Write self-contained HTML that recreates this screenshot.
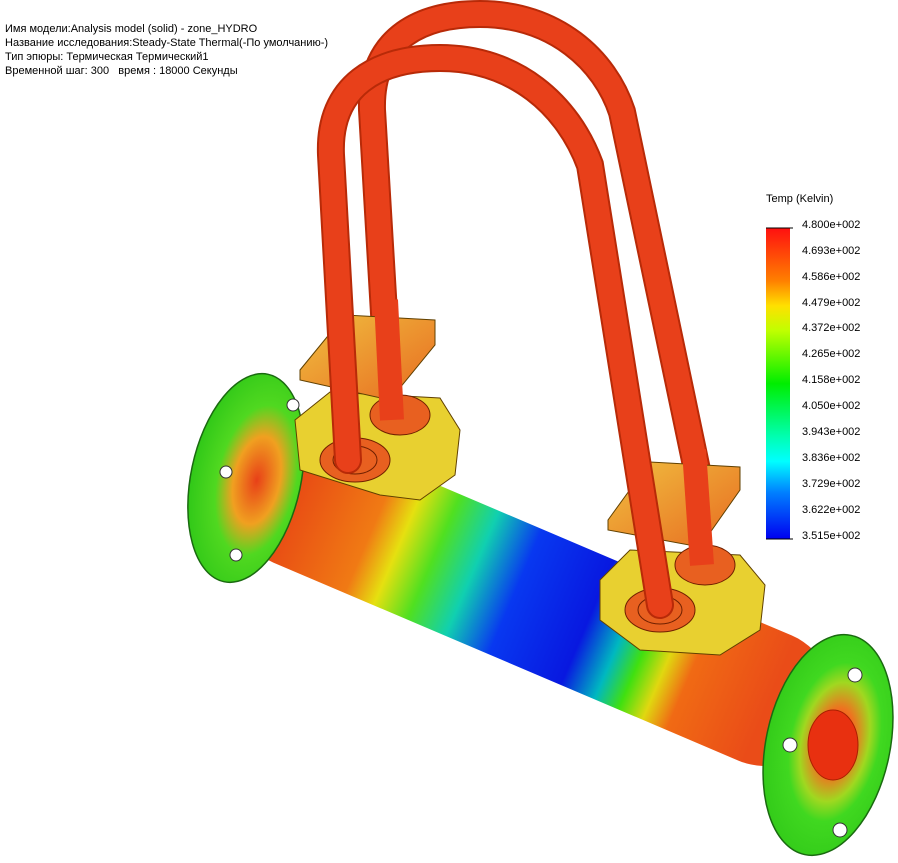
<!DOCTYPE html>
<html><head><meta charset="utf-8"><style>
html,body{margin:0;padding:0;background:#fff;}
#w{position:relative;width:898px;height:863px;overflow:hidden;font-family:"Liberation Sans","DejaVu Sans",sans-serif;}
.hd{position:absolute;left:5px;top:22px;font-size:11px;line-height:14px;color:#000;}
.lg{position:absolute;font-size:11px;color:#000;}
</style></head><body><div id="w">
<svg width="898" height="863" style="position:absolute;left:0;top:0">
<defs>
<linearGradient id="pipe" gradientUnits="userSpaceOnUse" x1="290" y1="495" x2="770" y2="700">
<stop offset="0" stop-color="#e84a14"/><stop offset="0.17" stop-color="#f07a14"/>
<stop offset="0.23" stop-color="#e6e010"/><stop offset="0.3" stop-color="#50e020"/>
<stop offset="0.38" stop-color="#10d0b0"/><stop offset="0.47" stop-color="#0838f0"/>
<stop offset="0.62" stop-color="#0818e0"/><stop offset="0.69" stop-color="#00b8c0"/>
<stop offset="0.74" stop-color="#40e010"/><stop offset="0.79" stop-color="#e0d810"/>
<stop offset="0.84" stop-color="#f06a14"/><stop offset="1" stop-color="#ea4c18"/>
</linearGradient>
<radialGradient id="fl1" cx="0.6" cy="0.5" r="0.6"><stop offset="0" stop-color="#e84018"/><stop offset="0.35" stop-color="#f0a020"/><stop offset="0.6" stop-color="#50d820"/><stop offset="1" stop-color="#30c818"/></radialGradient>
<radialGradient id="fl2" cx="0.55" cy="0.48" r="0.6"><stop offset="0" stop-color="#e83010"/><stop offset="0.25" stop-color="#f07020"/><stop offset="0.45" stop-color="#a0d820"/><stop offset="0.6" stop-color="#40d820"/><stop offset="1" stop-color="#30c818"/></radialGradient>
<linearGradient id="bar" x1="0" y1="0" x2="0" y2="1">
<stop offset="0" stop-color="#ff1010"/><stop offset="0.17" stop-color="#ff8000"/><stop offset="0.25" stop-color="#ffe000"/><stop offset="0.33" stop-color="#c0ff00"/><stop offset="0.5" stop-color="#00ee00"/><stop offset="0.67" stop-color="#00ffb0"/><stop offset="0.75" stop-color="#00ffff"/><stop offset="0.85" stop-color="#0080ff"/><stop offset="1" stop-color="#0000f0"/>
</linearGradient>
<linearGradient id="plate" x1="0" y1="0" x2="1" y2="1"><stop offset="0" stop-color="#f0c040"/><stop offset="1" stop-color="#e86a20"/></linearGradient>
</defs>
<!-- back tube -->
<path d="M385 330 L372 110 C370 35 425 14 480 14 C555 14 605 60 622 112 L697 470" fill="none" stroke="#b82a08" stroke-width="28" stroke-linecap="round"/>
<path d="M385 330 L372 110 C370 35 425 14 480 14 C555 14 605 60 622 112 L697 470" fill="none" stroke="#e8401a" stroke-width="24" stroke-linecap="round"/>
<!-- main pipe -->
<line x1="300" y1="500" x2="765" y2="698" stroke="url(#pipe)" stroke-width="136" stroke-linecap="round"/>
<!-- left flange -->
<ellipse cx="246" cy="478" rx="55" ry="106" transform="rotate(12 246 478)" fill="url(#fl1)" stroke="#1a6a10" stroke-width="1.5"/>
<circle cx="226" cy="472" r="6" fill="#fff" stroke="#333"/><circle cx="236" cy="555" r="6" fill="#fff" stroke="#333"/><circle cx="293" cy="405" r="6" fill="#fff" stroke="#333"/>
<!-- right flange -->
<ellipse cx="828" cy="745" rx="62" ry="112" transform="rotate(12 828 745)" fill="url(#fl2)" stroke="#1a6a10" stroke-width="1.5"/>
<circle cx="790" cy="745" r="7" fill="#fff" stroke="#333"/><circle cx="840" cy="830" r="7" fill="#fff" stroke="#333"/><circle cx="855" cy="675" r="7" fill="#fff" stroke="#333"/>
<ellipse cx="833" cy="745" rx="25" ry="35" fill="#e83010" stroke="#a82000"/>
<!-- left nut and plate -->
<polygon points="295,420 330,392 440,398 460,430 455,475 420,500 380,495 300,470" fill="#e8d030" stroke="#604000"/>
<ellipse cx="355" cy="460" rx="35" ry="22" fill="#e86020" stroke="#702000"/>
<ellipse cx="355" cy="460" rx="22" ry="14" fill="none" stroke="#702000"/>
<ellipse cx="400" cy="415" rx="30" ry="20" fill="#e86020" stroke="#702000"/>
<polygon points="300,370 345,315 435,320 435,345 390,400 300,380" fill="url(#plate)" stroke="#604000"/>
<!-- right nut and plate -->
<polygon points="600,580 630,550 740,555 765,585 760,630 720,655 640,650 600,620" fill="#e8d030" stroke="#604000"/>
<ellipse cx="660" cy="610" rx="35" ry="22" fill="#e86020" stroke="#702000"/>
<ellipse cx="660" cy="610" rx="22" ry="14" fill="none" stroke="#702000"/>
<ellipse cx="705" cy="565" rx="30" ry="20" fill="#e86020" stroke="#702000"/>
<polygon points="608,520 650,462 740,467 740,490 700,547 608,530" fill="url(#plate)" stroke="#604000"/>
<!-- back tube legs through plates -->
<line x1="386" y1="300" x2="392" y2="420" stroke="#e8401a" stroke-width="24"/>
<line x1="694" y1="450" x2="702" y2="565" stroke="#e8401a" stroke-width="24"/>
<!-- front tube -->
<path d="M348 460 L331 155 C328 85 378 58 440 58 C515 58 568 105 590 165 L660 605" fill="none" stroke="#b82a08" stroke-width="28" stroke-linecap="round"/>
<path d="M348 460 L331 155 C328 85 378 58 440 58 C515 58 568 105 590 165 L660 605" fill="none" stroke="#e8401a" stroke-width="24" stroke-linecap="round"/>
<!-- legend bar -->
<rect x="766" y="228" width="24" height="311" fill="url(#bar)"/>
<line x1="766" y1="228" x2="793" y2="228" stroke="#000"/><line x1="766" y1="539" x2="793" y2="539" stroke="#000"/>
</svg>
<div class="hd">Имя модели:Analysis model (solid) - zone_HYDRO<br>Название исследования:Steady-State Thermal(-По умолчанию-)<br>Тип эпюры: Термическая Термический1<br>Временной шаг: 300&nbsp;&nbsp; время : 18000 Секунды</div>
<div class="lg" style="left:766px;top:193px">Temp (Kelvin)</div>
<div class="lg" style="left:802px;top:219px">4.800e+002</div>
<div class="lg" style="left:802px;top:245px">4.693e+002</div>
<div class="lg" style="left:802px;top:271px">4.586e+002</div>
<div class="lg" style="left:802px;top:297px">4.479e+002</div>
<div class="lg" style="left:802px;top:322px">4.372e+002</div>
<div class="lg" style="left:802px;top:348px">4.265e+002</div>
<div class="lg" style="left:802px;top:374px">4.158e+002</div>
<div class="lg" style="left:802px;top:400px">4.050e+002</div>
<div class="lg" style="left:802px;top:426px">3.943e+002</div>
<div class="lg" style="left:802px;top:452px">3.836e+002</div>
<div class="lg" style="left:802px;top:478px">3.729e+002</div>
<div class="lg" style="left:802px;top:504px">3.622e+002</div>
<div class="lg" style="left:802px;top:530px">3.515e+002</div>
</div></body></html>
